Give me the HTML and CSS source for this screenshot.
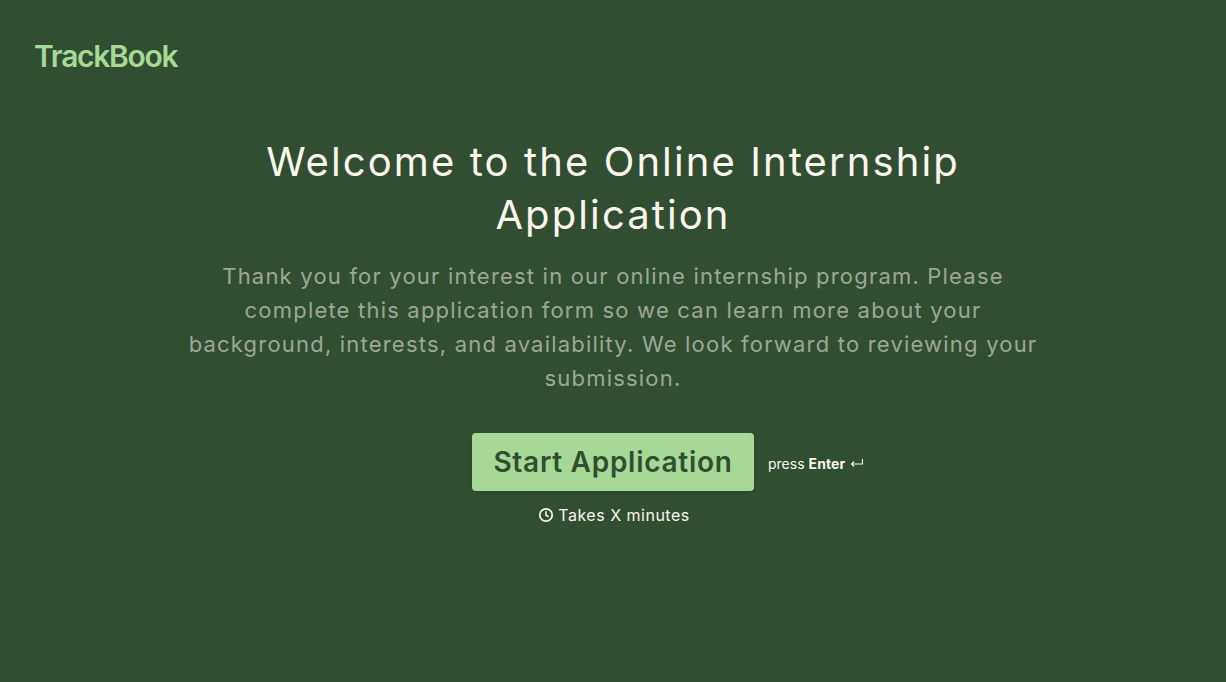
FILE: index.html
```html
<!DOCTYPE html>
<html lang="en">
<head>
<meta charset="utf-8">
<title>TrackBook</title>
<link rel="stylesheet" href="styles.css">
</head>
<body>
<header class="header"><span class="logo">TrackBook</span></header>
<main class="intro">
  <h1 class="title">Welcome to the Online Internship Application</h1>
  <p class="lead">Thank you for your interest in our online internship program. Please complete this application form so we can learn more about your background, interests, and availability. We look forward to reviewing your submission.</p>
  <div class="action">
    <span></span>
    <button class="start" type="button">Start Application</button>
    <span class="hint">press <b>Enter</b>
      <svg class="enter" viewBox="0 0 14 12" width="14" height="12" aria-hidden="true"><path d="M12.5 1V6H1.5M4 3.5 1.5 6 4 8.5" fill="none" stroke="currentColor" stroke-width="1.1"/></svg>
    </span>
  </div>
  <p class="time">
    <svg class="clock" viewBox="0 0 16 16" width="16" height="16" aria-hidden="true"><circle cx="8" cy="8" r="6.2" fill="none" stroke="currentColor" stroke-width="1.7"/><path d="M8 4.2V8.2L10.6 9.8" fill="none" stroke="currentColor" stroke-width="1.6"/></svg>
    Takes X minutes
  </p>
</main>
</body>
</html>
```
FILE: styles.css
```css
* { box-sizing: border-box; }
html, body { height: 100%; }
body {
  margin: 0;
  background: #314d32;
  color: #faf6ee;
  font-family: Inter, "Liberation Sans", sans-serif;
  overflow: hidden;
}
.header { padding: 40px 34px 0; height: 135px; }
.logo {
  display: block;
  color: #a5d995;
  font-size: 30px;
  line-height: 32px;
  font-weight: 600;
  letter-spacing: -1.3px;
}
.intro { display: flex; flex-direction: column; align-items: center; text-align: center; }
.title {
  margin: 0;
  width: 860px;
  font-size: 40px;
  line-height: 53px;
  font-weight: 400;
  letter-spacing: 2.1px;
}
.lead {
  margin: 18px 0 0;
  width: 860px;
  font-size: 22px;
  line-height: 34px;
  letter-spacing: 1.2px;
  color: rgba(250, 246, 238, 0.55);
}
.action {
  display: grid;
  grid-template-columns: 1fr auto 1fr;
  align-items: center;
  column-gap: 14px;
  width: 100%;
  margin-top: 38px;
}
.start {
  height: 58px;
  width: 282px;
  border: 0;
  border-radius: 4px;
  background: #a5d995;
  color: #314d32;
  font: 600 28px Inter, sans-serif;
  letter-spacing: 0.72px;
  box-shadow: 0 1px 3px rgba(0, 0, 0, 0.12);
}
.hint { display: flex; align-items: center; gap: 4px; font-size: 14px; padding-top: 3px; text-align: left; }
.hint b { font-weight: 700; letter-spacing: 0.1px; }
.enter { margin-left: 1px; }
.time {
  display: flex;
  align-items: center;
  gap: 4px;
  margin: 14px 0 0 2px;
  font-size: 16px;
  line-height: 20px;
  letter-spacing: 0.5px;
}
```
